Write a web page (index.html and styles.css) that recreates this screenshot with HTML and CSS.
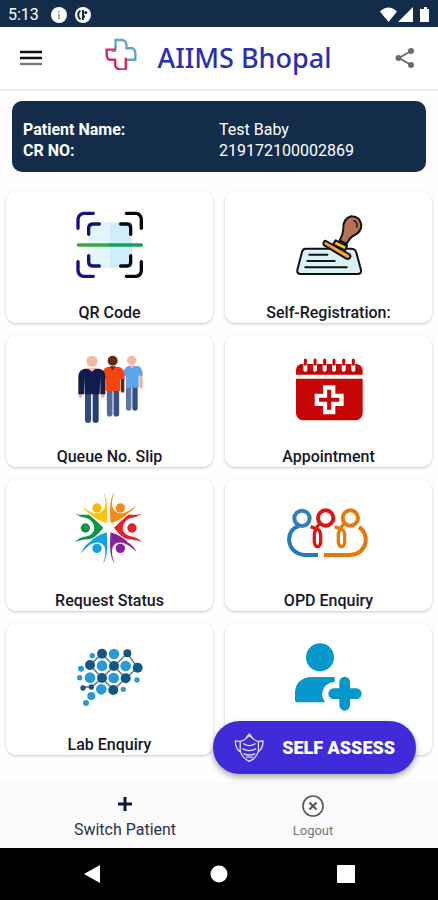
FILE: index.html
```
<!DOCTYPE html>
<html lang="en">
<head>
<meta charset="UTF-8">
<meta name="viewport" content="width=device-width, initial-scale=1">
<title>AIIMS Bhopal</title>
<link rel="stylesheet" href="styles.css">
</head>

<body>
<div class="statusbar">
<span class="time">5:13</span>
<svg class="dot" viewBox="0 0 16 16"><circle cx="8" cy="8" r="8" fill="#fff"/><path d="M8 7v5M8 4v1.600" stroke="#8b96a5" stroke-width="1.600"/></svg>
<svg class="dot" viewBox="0 0 16 16"><circle cx="8" cy="8" r="8" fill="#fff"/><path d="M5.500 3.500Q3 5 3.200 8.500q.3 2.500 2.300 4M8 3v10M8 9.500h2" fill="none" stroke="#132c4a" stroke-width="2"/><circle cx="10.800" cy="5.500" r="1.600" fill="#132c4a"/></svg>
<svg class="signals" viewBox="0 0 50 16"><path d="M0 4.500Q8.500-3.500 17 4.500L8.500 15zM33 0v15H18z" fill="#fff"/><path d="M42 2h2V0h3v2h2v13h-9V2z" fill="#fff"/></svg>
</div>

<header class="header">
<button class="iconbtn" aria-label="Menu">
<svg width="22" height="16" viewBox="0 0 22 16"><path d="M0 2h22M0 8h22" stroke="#111" stroke-width="2.400"/><path d="M0 14h22" stroke="#777" stroke-width="2.400"/></svg>
</button>
<div class="brand">
<svg width="32" height="32" viewBox="314 114 94 94" fill="none" stroke-width="7">
<path d="M345 148v-28h22q9 2 10 14v10h18q9 5 8 18v16h-28" stroke="#5ea6c9"/>
<path d="M345 148h-26v18q2 12 10 12h15v18q4 10 14 10h17v-34" stroke="#c92d62"/>
<path d="M345 136v17h-12" stroke="#a05a90" stroke-width="3"/>
</svg>
<h1>AIIMS Bhopal</h1>
</div>
<button class="iconbtn" aria-label="Share">
<svg width="20" height="20" viewBox="0 0 20 20" fill="#6c6c6c"><path d="M16 3L4 10l12 7" fill="none" stroke="#6c6c6c" stroke-width="1.800"/><circle cx="16" cy="3" r="3"/><circle cx="3.500" cy="10" r="3"/><circle cx="16" cy="17" r="3"/></svg>
</button>
</header>

<main class="main">
<dl class="patient">
<dt>Patient Name:</dt><dd>Test Baby</dd>
<dt>CR NO:</dt><dd>219172100002869</dd>
</dl>

<nav class="grid">
<a class="card" href="#qr">
<svg class="icon" viewBox="48 48 204 204" fill="none" stroke-width="10" stroke-linecap="round">
<path d="M84 82h66v137H84z" fill="#e2f6fd"/><path d="M150 82h66v137h-66z" fill="#cdeefa"/>
<path d="M54 100V72q2-14 16-17h30M54 200v27q2 14 16 17h30M86 118v-20q1-10 12-11h20M86 182v20q1 10 12 11h20" stroke="#14127a"/>
<path d="M199 55h30q13 2 15 17v28M199 244h30q13-2 15-17v-27M182 87h20q10 1 10 11v20M182 213h20q10-1 10-11v-20" stroke="#08080f"/>
<path d="M55 150h95" stroke="#3aaa35"/><path d="M150 150h94" stroke="#12a05c"/>
</svg>
<span>QR Code</span>
</a>
<a class="card" href="#registration">
<svg class="icon" viewBox="104 48 204 204" stroke="#111" stroke-width="6" stroke-linejoin="round" stroke-linecap="round">
<path d="M135 161h138q12 0 15 12l14 52q2 12-10 12H121q-12 0-10-12l14-54q3-10 10-10z" fill="#d8f0f8"/>
<path d="M147 179h54M141 198h82M135 217h124" fill="none"/>
<path d="M238 136q10-16 11-34-2-31 24-38 27 0 30 28-1 19-20 28-15 7-24 27z" fill="#b57358"/>
<path d="M280 77q14 6 9 20" fill="none" stroke-width="4"/>
<path d="M226 136l34 17-6 13-36-18z" fill="#fbc531"/>
<path d="M197 138l69 39q7 5 3 11t-11 3l-65-39q-6-4-3-10t7-4z" fill="#f5a042"/>
</svg>
<span>Self-Registration:</span>
</a>
<a class="card" href="#queue">
<svg class="icon" viewBox="76 45 204 204" stroke-linecap="round">
<path d="M271 95v46" stroke="#f2ab9a" stroke-width="9"/><path d="M234 145v59" stroke="#61779f" stroke-width="16"/><path d="M253 145v59" stroke="#33508a" stroke-width="16"/>
<path d="M232 78h30q14 3 14 29h-12v36h-38v-35h-9q0-24 15-30z" fill="#5ba4ee"/>
<path d="M236 76h14l-7 11z" fill="#f4bcae"/><circle cx="243" cy="61" r="14" fill="#f6b7a5"/>
<path d="M216 115v38" stroke="#672817" stroke-width="10"/>
<path d="M177 145v76" stroke="#526b9a" stroke-width="17"/><path d="M197 145v76" stroke="#3a4e84" stroke-width="17"/>
<path d="M171 81h36q15 3 15 36h-13v36h-44V116h-12q0-32 18-35z" fill="#fa4410"/>
<path d="M176 79h20l-10 12z" fill="#672817"/><circle cx="186" cy="62" r="15" fill="#672817"/>
<path d="M90 155v14M156 155v14" stroke="#f2ab9a" stroke-width="11"/>
<path d="M112 155v85" stroke="#304b82" stroke-width="18"/><path d="M135 155v85" stroke="#263e75" stroke-width="18"/>
<path d="M102 86h44q17 3 18 24v53h-15v-54l-2 54h-45l-2-54v54H83v-53q1-21 19-24z" fill="#101c4d"/>
<path d="M111 85h25l-12 10z" fill="#f4bcae"/><circle cx="124" cy="64" r="17" fill="#f6b7a5"/>
</svg>
<span>Queue No. Slip</span>
</a>
<a class="card" href="#appointment">
<svg class="icon" viewBox="73 45 204 204">
<path d="M76 104V90q2-18 18-18h162q17 0 20 18v14zM76 116h200v104q-2 18-19 21H95q-17-3-19-21z" fill="#c80505"/>
<path d="M104 76v13M133 76v13M162 76v13M190 76v13M219 76v13M248 76v13" stroke="#fff" stroke-width="12" stroke-linecap="round"/>
<path d="M104 60v13M133 60v13M162 60v13M190 60v13M219 60v13M248 60v13" stroke="#c80505" stroke-width="9" stroke-linecap="round"/>
<path d="M157 136h37v25h25v37h-25v25h-37v-25h-25v-37h25z" fill="#fff"/>
<path d="M175.500 149v60M145 179.500h61" stroke="#c80505" stroke-width="12"/>
</svg>
<span>Appointment</span>
</a>
<a class="card" href="#status">
<svg class="icon" viewBox="76 60 204 204">
<path d="M157 38q18 23 11 95-33-10-53-31-14-9-22-22 16 16 36 22 24 5 33-16 7-21-5-48z" fill="#fcc30b"/><circle cx="139" cy="87" r="14" fill="#f9b90b"/>
<path d="M192 38q-19 23-12 95 33-10 53-31 16-9 24-25-18 20-38 25-24 5-33-16-6-21 6-48z" fill="#f28b18"/><circle cx="209" cy="87" r="14" fill="#f28b18"/>
<path d="M73 104q18 5 42 3 12 9 43 39-24 32-42 35-28 1-44 9 13-15 37-18 22-7 22-25-2-22-24-30-19-3-34-13z" fill="#129448"/><circle cx="104" cy="147" r="14" fill="#129448"/>
<path d="M275 104q-18 5-42 3-12 9-43 39 24 32 42 35 26 1 42 9-13-15-35-18-23-7-23-25 2-22 24-30 19-3 35-13z" fill="#e8202b"/><circle cx="244" cy="147" r="14" fill="#e8202b"/>
<path d="M157 254q18-23 11-94-34 10-53 31-16 9-23 33 15-23 37-32 24-5 33 12 6 21-5 50z" fill="#159fe5"/><circle cx="139" cy="208" r="14" fill="#159fe5"/>
<path d="M192 254q-19-23-12-94 34 10 53 31 16 9 25 29-17-19-39-28-24-5-33 12-6 21 6 50z" fill="#85229a"/><circle cx="209" cy="208" r="14" fill="#85229a"/>
</svg>
<span>Request Status</span>
</a>
<a class="card" href="#opd">
<svg class="icon" viewBox="76 30 204 204" fill="none" stroke-width="12">
<circle cx="97" cy="88" r="23" stroke="#347fb8"/><path d="M88 111q-29 8-30 41 4 40 45 46h42" stroke="#287bb6"/>
<circle cx="168" cy="87" r="23" stroke="#df1416"/><path d="M151 103q-14 14-17 31v27q3 13 10 12 7-1 9-12v-26q-3-14-15-16l-15-6" stroke="#df1416" stroke-width="10"/>
<circle cx="242" cy="87" r="23" stroke="#e7790c"/><path d="M225 103q-15 14-19 31v27q3 13 10 12 7-1 9-12v-26q-3-14-15-16l-15-6" stroke="#e7790c" stroke-width="10"/>
<path d="M163 198h79q38-3 46-39 3-29-20-45" stroke="#e7790c"/>
</svg>
<span>OPD Enquiry</span>
</a>
<a class="card" href="#lab">
<svg class="icon" viewBox="76 42 204 204">
<path d="M118 108l36-34 71 74 36-32-31-43-76 74-36-39M154 147l34 36 37-35M124 174h-27M154 147l-30 27" fill="none" stroke="#527386" stroke-width="4"/>
<g fill="#2999d8"><circle cx="190" cy="75" r="16"/><circle cx="154" cy="110" r="16"/><circle cx="225" cy="111" r="16"/><circle cx="118" cy="146" r="16"/><circle cx="189" cy="147" r="16"/><circle cx="152" cy="181" r="16"/><circle cx="122" cy="201" r="12"/><circle cx="106" cy="222" r="9"/><circle cx="91" cy="119" r="9"/><circle cx="87" cy="146" r="8"/><circle cx="125" cy="80" r="8"/><circle cx="259" cy="153" r="8"/><circle cx="218" cy="181" r="8"/></g>
<g fill="#145782"><circle cx="154" cy="74" r="15"/><circle cx="230" cy="73" r="12"/><circle cx="118" cy="108" r="15"/><circle cx="190" cy="111" r="15"/><circle cx="261" cy="116" r="15"/><circle cx="154" cy="147" r="15"/><circle cx="225" cy="148" r="15"/><circle cx="188" cy="183" r="15"/><circle cx="97" cy="177" r="8"/><circle cx="122" cy="174" r="8"/></g>
</svg>
<span>Lab Enquiry</span>
</a>
<a class="card" href="#add" aria-label="Add patient">
<svg class="icon" viewBox="286 57 204 204" fill="#0498cd">
<circle cx="361" cy="100" r="42"/><path d="M332 159h73v14q-34 4-38 37 1 14 9 25h-85q-5 0-5-6v-25q3-40 46-45z"/>
<path d="M435 174v70M402 209h68" stroke="#0498cd" stroke-width="32" stroke-linecap="round"/>
</svg>
</a>
</nav>

<button class="assess">
<svg width="30" height="30" viewBox="98 322 92 92" fill="none" stroke="#e4dfff" stroke-width="4" stroke-linejoin="round">
<path d="M117 348q11-2 28-18 17 16 28 18v29q-5 21-28 32-23-11-28-32zM117 348l-15-2q0 25 16 34M173 348l14-2q0 25-15 34M133 340l12-15 12 15M126 354q19 13 38 0M124 370q21 12 42 0M127 385q18 9 36 0M135 396h20"/>
</svg>
SELF ASSESS
</button>
</main>

<footer class="tabs">
<button class="tab active">
<svg width="16" height="16" viewBox="0 0 16 16"><path d="M8 1v14M1 8h14" stroke="#0b173b" stroke-width="3"/></svg>
Switch Patient
</button>
<button class="tab">
<svg width="24" height="24" viewBox="0 0 24 24" fill="none" stroke="#555"><circle cx="12" cy="12" r="10" stroke-width="1.600"/><path d="M8.500 8.500l7 7M15.500 8.500l-7 7" stroke-width="2"/></svg>
Logout
</button>
</footer>

<div class="sysnav">
<button aria-label="Back"><svg width="18" height="20" viewBox="0 0 18 20"><path d="M17 1v18L1 10z" fill="#fff"/></svg></button>
<button aria-label="Home"><svg width="18" height="18" viewBox="0 0 18 18"><circle cx="9" cy="9" r="8.500" fill="#fff"/></svg></button>
<button aria-label="Recent apps"><svg width="18" height="18" viewBox="0 0 18 18"><rect width="18" height="18" rx="1" fill="#fff"/></svg></button>
</div>
</body>
</html>
```

FILE: styles.css
```
*{
    box-sizing:border-box;
    padding:0;
    margin:0;
}
body{
    font-family:Roboto, sans-serif;
    display:flex;
    flex-direction:column;
    min-height:100vh;
    background:#fefefe;
    color:#17172b;
}
button{
    font-family:inherit;
    border:0;
    background:none;
    cursor:pointer;
}
svg{
    display:block;
    flex:none;
}
.statusbar{
    display:flex;
    align-items:center;
    gap:8px;
    height:27px;
    padding:2px 8px 0;
    background:#132c4a;
    color:#fff;
}
.time{
    font-size:16px;
    margin-right:4px;
}
.dot{
    width:16px;
    height:16px;
}
.signals{
    width:50px;
    height:16px;
    margin-left:auto;
}
.header{
    display:flex;
    align-items:center;
    justify-content:space-between;
    height:64px;
    padding:0 23px 0 20px;
    background:#fff;
    border-bottom:2px solid #ededed;
}
.brand{
    display:flex;
    align-items:center;
    gap:20px;
}
.brand svg{
    margin-bottom:8px;
}
.brand h1{
    font-family:"Noto Sans", sans-serif;
    font-size:27px;
    font-weight:500;
    line-height:36px;
    color:#2a2fb4;
}
.main{
    position:relative;
    flex:1;
    padding:10px 6px 26px;
}
.patient{
    display:grid;
    grid-template-columns:1fr 1fr;
    align-content:center;
    margin:0 6px 19px;
    padding:18px 11px 11px;
    border-radius:10px;
    background:#132c4a;
    color:#fff;
    font-size:16px;
    line-height:21px;
}
.patient dt{
    font-weight:700;
}
.grid{
    display:grid;
    grid-template-columns:1fr 1fr;
    gap:12px;
}
.card{
    display:flex;
    flex-direction:column;
    align-items:center;
    justify-content:space-between;
    height:132px;
    padding-top:20px;
    border-radius:10px;
    background:#fff;
    box-shadow:0 1px 3px rgba(0,0,0,0.22);
    color:inherit;
    font-size:16px;
    font-weight:500;
    line-height:20px;
    text-decoration:none;
}
.icon{
    width:68px;
    height:68px;
    overflow:visible;
}
.assess{
    position:absolute;
    right:22px;
    bottom:8px;
    display:flex;
    align-items:center;
    gap:18px;
    height:53px;
    padding:0 21px;
    border-radius:27px;
    background:#402bd8;
    box-shadow:0 3px 6px rgba(0,0,0,0.35);
    color:#fff;
    font-size:18px;
    font-weight:900;
}
.tabs{
    display:flex;
    justify-content:center;
    height:66px;
    padding:0 31px;
    background:#fafafa;
}
.tab{
    flex:1;
    display:flex;
    flex-direction:column;
    align-items:center;
    justify-content:space-between;
    padding:12px 0 8px;
    color:#777;
    font-size:13px;
    line-height:18px;
}
.tab.active{
    padding-top:14px;
    color:#2c304c;
    font-size:16px;
    line-height:20px;
}
.sysnav{
    display:flex;
    align-items:center;
    justify-content:space-between;
    height:52px;
    padding:0 19%;
    background:#000;
}
.sysnav button{
    display:flex;
    justify-content:center;
}
```
